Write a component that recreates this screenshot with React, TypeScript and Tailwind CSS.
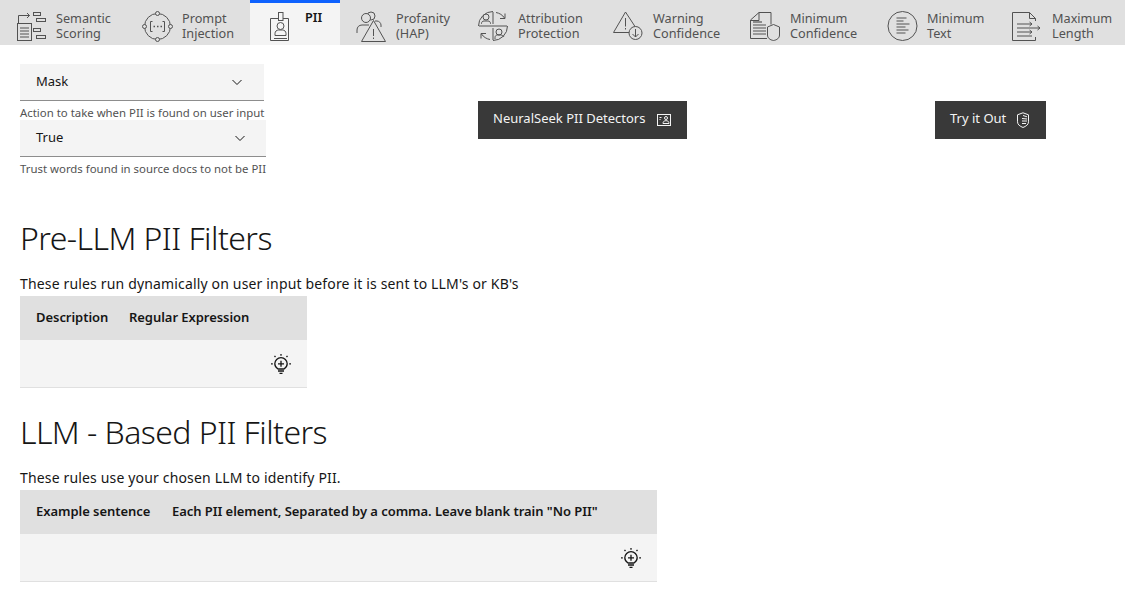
import React from "react";

const s = { fill: "none", stroke: "currentColor", strokeWidth: 1 } as const;

const Svg = ({ children }: { children: React.ReactNode }) => (
  <svg width={32} height={32} viewBox="0 0 32 32" {...s} className="shrink-0 block">{children}</svg>
);

const Scoring = () => (
  <Svg>
    <rect x="1.500" y="13.500" width="14" height="17" />
    <path d="M4 18h9M4 21h9M4 24h9M4 27h9" />
    <path d="M2.500 13V5.500h11M11 3l2.500 2.500L11 8" />
    <rect x="17.500" y="2.500" width="7" height="3" />
    <rect x="20.500" y="8.500" width="9" height="3" />
    <rect x="17.500" y="18.500" width="7" height="3" />
    <rect x="20.500" y="25.500" width="9" height="3" />
  </Svg>
);
const Injection = () => (
  <Svg>
    <circle cx="15.500" cy="16.500" r="13" />
    <circle cx="15.500" cy="3.500" r="2" fill="#e0e0e0" />
    <circle cx="15.500" cy="29.500" r="2" fill="#e0e0e0" />
    <circle cx="2.500" cy="16.500" r="2" fill="#e0e0e0" />
    <circle cx="28.500" cy="16.500" r="2" fill="#e0e0e0" />
    <path d="M10.500 11.500H8.500v10h2M20.500 11.500h2v10h-2" />
    <path d="M11.500 16.500h1.500M15 16.500h1.500M18.500 16.500h1.500" strokeWidth="1.500" />
  </Svg>
);
const Badge = () => (
  <Svg>
    <path d="M10 8.500H2.500v22h18v-22H15" />
    <rect x="10.500" y="2.500" width="4.500" height="8" />
    <circle cx="12.500" cy="16" r="3.500" />
    <path d="M7 25.500v-2c0-2 1.500-3.500 3.500-3.500h4c2 0 3.500 1.500 3.500 3.500v2zM6 28.500h13" />
  </Svg>
);
const Profanity = () => (
  <Svg>
    <circle cx="15" cy="6" r="4" />
    <circle cx="10" cy="8" r="4.500" fill="#e0e0e0" />
    <path d="M1 23v-3c0-3 2-5 5-5h7M19 11h2c2 0 4 2 4 4v2" />
    <path d="M17.500 10.500 5.500 31.500h24z" fill="#e0e0e0" />
    <path d="M17.500 19v7M17.500 27.500v1.500" />
  </Svg>
);
const Attribution = () => (
  <Svg>
    <path d="M15 1.500A14.500 14.500 0 0 0 .5 16M29.500 16A14.500 14.500 0 0 1 15 30.500" />
    <path d="M18 2.500c3.500.6 6.500 2.500 8.500 5.500M22 8.500h5v-5M12 29.500c-3.500-.6-6.500-2.500-8.500-5.500M8 23.500H3v5" />
    <path d="M15 2v12M15 18v12M1 16h28" />
    <circle cx="8" cy="7" r="3" />
    <path d="M3.500 14v-.5c0-1.500 1-2.500 2.500-2.500h4c1.500 0 2.500 1 2.500 2.500v.5" />
    <circle cx="21" cy="22" r="3" />
    <path d="M17 29v-1.500c0-1.500 1-2.500 2.500-2.500h3c1.500 0 3 1 3.500 2" />
  </Svg>
);
const Warning = () => (
  <Svg>
    <path d="M12.500 2 .5 22.500H17M12.500 2 23 18" />
    <path d="M12.500 8v8.500M12.500 18v1.500" />
    <circle cx="22.500" cy="23" r="6.500" fill="#e0e0e0" />
    <path d="M22.500 19v8M19.500 24l3 3 3-3" />
  </Svg>
);
const DocShield = () => (
  <Svg>
    <path d="M17 28.500H.5V10L9 2.500h12v12" />
    <path d="M9 2.500v8H.5" />
    <path d="M3 12h9" strokeWidth="2" opacity="0.6" />
    <path d="M3 15h13M3 18h13M3 21h13M3 24h13" />
    <path d="M23.500 14.500l6 2.500v8c0 3-2.500 5-6 5.500-3.500-.5-6-2.500-6-5.500v-8z" fill="#e0e0e0" />
  </Svg>
);
const TextCircle = () => (
  <Svg>
    <circle cx="15.500" cy="16" r="14.500" />
    <path d="M9.500 8h10M9.500 11h7M9.500 14h13M9.500 17h9M9.500 20h12M9.500 23h9" />
  </Svg>
);
const DocArrows = () => (
  <Svg>
    <path d="M23.500 11V8.500l-6-6H.5v28h23V27" />
    <path d="M17.500 2.500v6h6" />
    <path d="M5 14h15M17.500 12l2.500 2-2.500 2M5 18h23M25.500 16l2.500 2-2.500 2M5 22h15M17.500 20l2.500 2-2.500 2M5 26h15" />
  </Svg>
);
const Lightbulb = () => (
  <svg width="20" height="20" viewBox="0 0 20 20" fill="none" stroke="#161616" strokeWidth="1.300" className="shrink-0 block">
    <path d="M7 15C5 13.800 3.800 12 3.800 9.800a6.200 6.200 0 0 1 12.400 0c0 2.200-1.200 4-3.200 5.200z" />
    <path d="M7 17h6M8.500 19.300h3" />
    <path d="M10 6.800v6M7 9.800h6" />
    <path d="M10 0v1.800M3.500 1.800l1 1.200M16.500 1.800l-1 1.200M0 9.800h1.800M18.200 9.800H20" />
  </svg>
);
const ImageIcon = () => (
  <svg width="14" height="14" viewBox="0 0 14 14" fill="none" stroke="#f4f4f4" strokeWidth="1" className="shrink-0 block">
    <rect x="0.500" y="1.500" width="13" height="11" />
    <path d="M2.500 4.500h2M2.500 6.500h1" />
    <circle cx="9" cy="5" r="1.500" />
    <path d="M6 10.500c0-2 1.200-2.800 3-2.800s3 .8 3 2.800z" />
  </svg>
);
const ShieldIcon = () => (
  <svg width="14" height="16" viewBox="0 0 14 16" fill="none" stroke="#f4f4f4" strokeWidth="1" className="shrink-0 block">
    <path d="M7 .8 12.500 2.800v7c0 2.800-2.500 4.500-5.500 5.700-3-1.200-5.500-2.900-5.500-5.700v-7z" />
    <path d="M7 3.500 11 4.800M6 6.500l5 .5M6 9h5M6 11.500h4" />
  </svg>
);

const tabs = [
  { w: "w-[126px]", icon: <Scoring />, a: "Semantic", b: "Scoring" },
  { w: "w-[124px]", icon: <Injection />, a: "Prompt", b: "Injection" },
  { w: "w-[90px]", icon: <Badge />, a: "PII", b: "", active: true },
  { w: "w-[122px]", icon: <Profanity />, a: "Profanity", b: "(HAP)" },
  { w: "w-[135px]", icon: <Attribution />, a: "Attribution", b: "Protection" },
  { w: "w-[137px]", icon: <Warning />, a: "Warning", b: "Confidence" },
  { w: "w-[137px]", icon: <DocShield />, a: "Minimum", b: "Confidence" },
  { w: "w-[125px]", icon: <TextCircle />, a: "Minimum", b: "Text" },
  { w: "w-[129px]", icon: <DocArrows />, a: "Maximum", b: "Length" },
];

const Select = ({ value, w, chevron, help }: { value: string; w: string; chevron: string; help: string }) => (
  <div className="flex flex-col">
    <div className={`${w} h-[37px] bg-[#f4f4f4] border-b border-[#8d8d8d] flex items-center justify-between pl-4 ${chevron}`}>
      <span className="text-[13px] leading-none text-[#161616] -mt-[2px]">{value}</span>
      <svg width="12" height="12" viewBox="0 0 12 12" fill="none" stroke="#161616" strokeWidth="1"><path d="M1.500 4 6 8.500 10.500 4" /></svg>
    </div>
    <p className="text-[11.4px] leading-[16px] mt-1 text-[#525252] whitespace-nowrap">{help}</p>
  </div>
);

const DarkButton = ({ label, w, icon }: { label: string; w: string; icon: React.ReactNode }) => (
  <div className={`${w} h-[38px] bg-[#393939] flex items-center justify-between pl-4 pr-4 text-[13px] text-[#f4f4f4] pb-[3px]`}>
    <span className="whitespace-nowrap -ml-px">{label}</span>
    <span className="mt-[2px]">{icon}</span>
  </div>
);

const Table = ({ w, cols }: { w: string; cols: { w: string; label: string }[] }) => (
  <div className={`${w} mt-[2px]`}>
    <div className="h-[44px] bg-[#e0e0e0] flex items-center text-[13px] font-semibold tracking-[-0.05px] text-[#161616]">
      {cols.map((c) => (
        <div key={c.label} className={`${c.w} pl-4 whitespace-nowrap`}>{c.label}</div>
      ))}
    </div>
    <div className="h-[48px] bg-[#f4f4f4] border-b border-[#e0e0e0] flex items-center justify-end pr-4">
      <Lightbulb />
    </div>
  </div>
);

export default function App() {
  return (
    <div className="w-[1125px] h-[596px] bg-white overflow-hidden font-['Noto_Sans','Liberation_Sans',sans-serif]">
      <nav className="h-[45px] bg-[#e0e0e0] flex">
        {tabs.map((t) => (
          <div
            key={t.a + t.b}
            className={`${t.w} h-[45px] flex items-center border-t-[3px] ${t.active ? "bg-[#f4f4f4] border-[#0f62fe] pl-[18px] gap-[5px] text-[#161616]" : "border-transparent pl-4 gap-2 text-[#525252]"}`}
          >
            <span className="text-[#525252] mt-[4px]">{t.icon}</span>
            <span className={`text-[12.7px] leading-[15px] ${t.active ? "font-semibold self-start mt-[7px]" : "mt-[4px]"}`}>
              {t.a}
              {t.b && <br />}
              {t.b}
            </span>
          </div>
        ))}
      </nav>

      <main className="px-5">
        <div className="flex items-start mt-[19px]">
          <div className="flex flex-col w-[458px]">
            <Select value="Mask" w="w-[244px]" chevron="pr-[21px]" help="Action to take when PII is found on user input" />
            <div className="-mt-[1px]">
              <Select value="True" w="w-[246px]" chevron="pr-[20px]" help="Trust words found in source docs to not be PII" />
            </div>
          </div>
          <div className="mt-[37px] flex">
            <DarkButton label="NeuralSeek PII Detectors" w="w-[209px]" icon={<ImageIcon />} />
            <div className="ml-[248px]">
              <DarkButton label="Try it Out" w="w-[111px]" icon={<ShieldIcon />} />
            </div>
          </div>
        </div>

        <h2 className="text-[32px] leading-[40px] font-light tracking-[-0.55px] text-[#161616] mt-[41px]">Pre-LLM PII Filters</h2>
        <p className="text-[14px] leading-[20px] tracking-[0.16px] text-[#161616] mt-[16px]">These rules run dynamically on user input before it is sent to LLM's or KB's</p>
        <Table w="w-[287px]" cols={[{ w: "w-[93px]", label: "Description" }, { w: "w-[194px]", label: "Regular Expression" }]} />

        <h2 className="text-[32px] leading-[40px] font-light tracking-[-0.55px] text-[#161616] mt-[24px]">LLM - Based PII Filters</h2>
        <p className="text-[14px] leading-[20px] tracking-[0.16px] text-[#161616] mt-[16px]">These rules use your chosen LLM to identify PII.</p>
        <Table w="w-[637px]" cols={[{ w: "w-[136px]", label: "Example sentence" }, { w: "w-[501px]", label: 'Each PII element, Separated by a comma. Leave blank train "No PII"' }]} />
      </main>
    </div>
  );
}
